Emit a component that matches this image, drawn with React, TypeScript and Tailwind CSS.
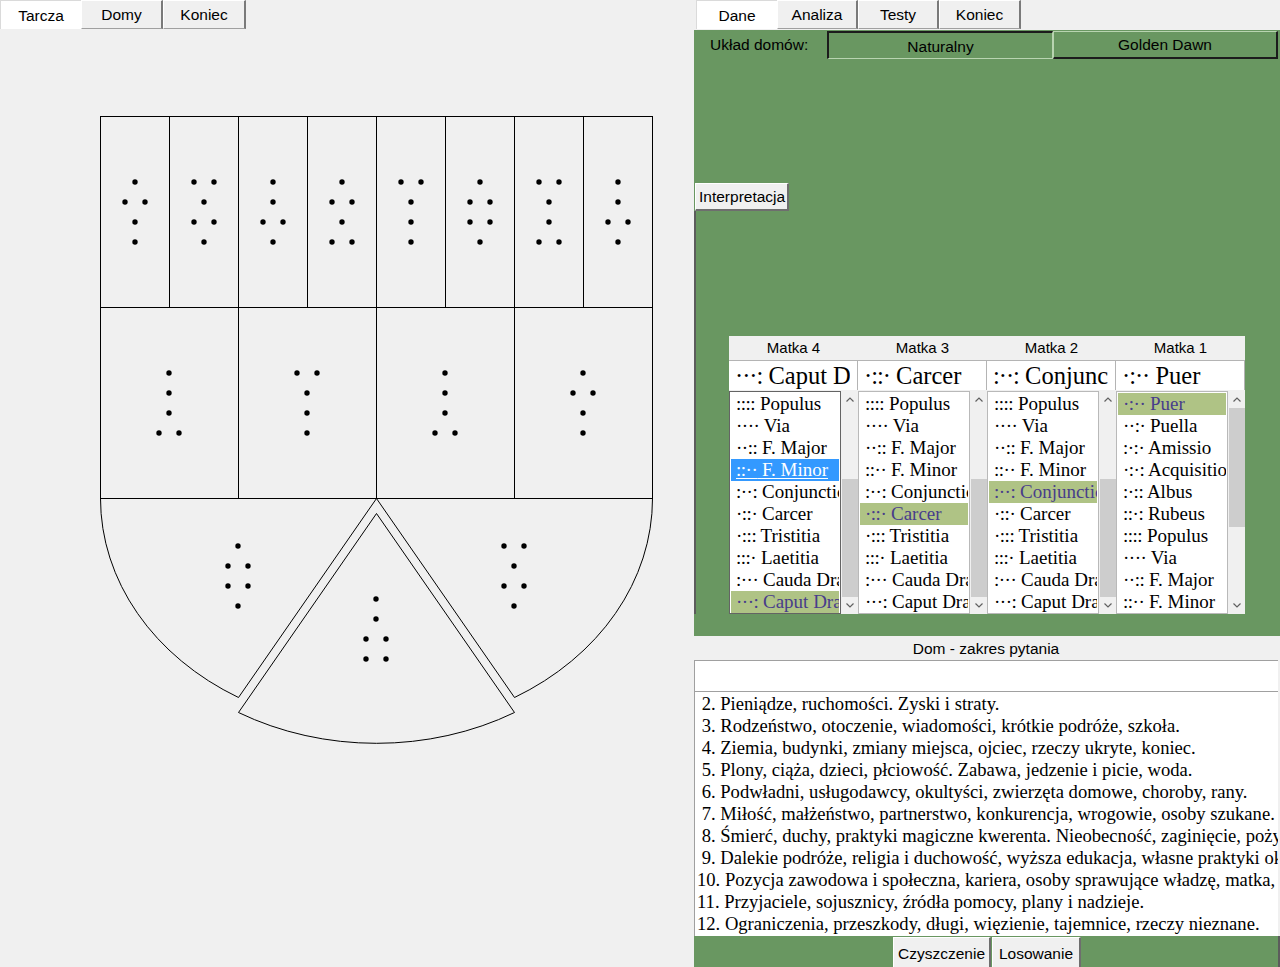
import React from "react";

const SANS = "font-['Liberation_Sans',Arial,sans-serif]";
const SERIF = "font-['Liberation_Serif','Times_New_Roman',serif]";

type Fig = number[];

// shield figures, rows top to bottom (1 = single dot, 2 = pair)
const topRow: Fig[] = [
  [1, 2, 1, 1],
  [2, 1, 2, 1],
  [1, 1, 2, 1],
  [1, 2, 1, 2],
  [2, 1, 1, 1],
  [1, 2, 2, 1],
  [2, 1, 1, 2],
  [1, 1, 2, 1],
];
const midRow: Fig[] = [
  [1, 1, 1, 2],
  [2, 1, 1, 1],
  [1, 1, 1, 2],
  [1, 2, 1, 1],
];

function Dots({ cx, cy, rows }: { cx: number; cy: number; rows: Fig }) {
  return (
    <g fill="#000">
      {rows.map((n, i) => {
        const y = cy - 30 + i * 20;
        return n === 1 ? (
          <circle key={i} cx={cx} cy={y} r={2.7} />
        ) : (
          <g key={i}>
            <circle cx={cx - 10} cy={y} r={2.7} />
            <circle cx={cx + 10} cy={y} r={2.7} />
          </g>
        );
      })}
    </g>
  );
}

function Shield() {
  return (
    <svg width={694} height={937} viewBox="0 30 694 937" className="block">
      <g stroke="#000" strokeWidth={1} fill="none" shapeRendering="crispEdges">
        <path d="M100.5 116.5 H652.5 V498.5 H100.5 Z" />
        <path d="M100.5 307.5 H652.5" />
        {[169, 238, 307, 376, 445, 514, 583].map((x) => (
          <path key={x} d={`M${x + 0.5} 116.5 V307.5`} />
        ))}
        {[238, 376, 514].map((x) => (
          <path key={x} d={`M${x + 0.5} 307.5 V498.5`} />
        ))}
      </g>
      <g stroke="#000" strokeWidth={1} fill="none">
        <path d="M100.5 498.5 A276 230 0 0 0 238.5 697.5 L376.5 498.5" />
        <path d="M652.5 498.5 A276 230 0 0 1 514.5 697.5 L376.5 498.5" />
        <path d="M376.5 513.5 L238.5 712.5 A276 230 0 0 0 514.5 712.5 Z" />
      </g>
      {topRow.map((f, i) => (
        <Dots key={i} cx={135 + i * 69} cy={212} rows={f} />
      ))}
      {midRow.map((f, i) => (
        <Dots key={i} cx={169 + i * 138} cy={403} rows={f} />
      ))}
      <Dots cx={238} cy={576} rows={[1, 2, 2, 1]} />
      <Dots cx={514} cy={576} rows={[2, 1, 2, 1]} />
      <Dots cx={376} cy={629} rows={[1, 1, 2, 2]} />
    </svg>
  );
}

function Tab({ label, active, w }: { label: string; active?: boolean; w: string }) {
  return (
    <div
      className={
        active
          ? `${w} h-[29px] flex items-center justify-center pt-[2px] bg-white border-l border-t border-[#dadada] text-[15.5px] text-black`
          : `${w} h-[29px] flex items-center justify-center bg-[#f0f0f0] border-l border-t border-white border-r-2 border-r-[#7a7a7a] border-b border-b-[#a0a0a0] text-[15.5px] text-black`
      }
    >
      {label}
    </div>
  );
}

const sym: Record<string, string> = {
  Populus: "::::",
  Via: "····",
  "F. Major": "··::",
  "F. Minor": "::··",
  Conjunctio: ":··:",
  Carcer: "·::·",
  Tristitia: "·:::",
  Laetitia: ":::·",
  "Cauda Draconis": ":···",
  "Caput Draconis": "···:",
  Puer: "·:··",
  Puella: "··:·",
  Amissio: ":·:·",
  Acquisitio: "·:·:",
  Albus: ":·::",
  Rubeus: "::·:",
};

const mainList = [
  "Populus",
  "Via",
  "F. Major",
  "F. Minor",
  "Conjunctio",
  "Carcer",
  "Tristitia",
  "Laetitia",
  "Cauda Draconis",
  "Caput Draconis",
];
const puerList = [
  "Puer",
  "Puella",
  "Amissio",
  "Acquisitio",
  "Albus",
  "Rubeus",
  "Populus",
  "Via",
  "F. Major",
  "F. Minor",
];

type Col = {
  title: string;
  current: string;
  items: string[];
  hit: string;
  sel?: string;
  thumbTop: number;
  focused?: boolean;
};

const cols: Col[] = [
  { title: "Matka 4", current: "Caput Draconis", items: mainList, hit: "Caput Draconis", sel: "F. Minor", thumbTop: 71, focused: true },
  { title: "Matka 3", current: "Carcer", items: mainList, hit: "Carcer", thumbTop: 71 },
  { title: "Matka 2", current: "Conjunctio", items: mainList, hit: "Conjunctio", thumbTop: 71 },
  { title: "Matka 1", current: "Puer", items: puerList, hit: "Puer", thumbTop: 0 },
];

function ScrollBar({ thumbTop }: { thumbTop: number }) {
  return (
    <div className="w-[16px] ml-[1px] flex flex-col bg-[#f0f0f0]">
      <div className="h-[17px] flex items-center justify-center">
        <svg width="8" height="5" viewBox="0 0 8 5">
          <path d="M0.5 4.5 L4 1 L7.5 4.5" stroke="#606060" strokeWidth="1.2" fill="none" />
        </svg>
      </div>
      <div style={{ height: thumbTop }} />
      <div className="h-[119px] bg-[#cdcdcd]" />
      <div className="flex-1" />
      <div className="h-[17px] flex items-center justify-center">
        <svg width="8" height="5" viewBox="0 0 8 5">
          <path d="M0.5 0.5 L4 4 L7.5 0.5" stroke="#606060" strokeWidth="1.2" fill="none" />
        </svg>
      </div>
    </div>
  );
}

function MatkaTable() {
  return (
    <div className="w-[516px] bg-[#f0f0f0]">
      <div className="flex h-[24px]">
        {cols.map((c) => (
          <div key={c.title} className="w-[129px] flex items-center justify-center text-[15px] text-black">
            {c.title}
          </div>
        ))}
      </div>
      <div className="flex h-[30px]">
        {cols.map((c) => (
          <div
            key={c.title}
            className={`w-[129px] bg-white border-t border-r border-[#b4b4b4] pl-[6px] pr-[7px] text-[24.5px] leading-[29px] text-black ${SERIF}`}
          >
            <div className="overflow-hidden whitespace-nowrap">
              <span className="tracking-[-1px]">{sym[c.current]}</span> {c.current}
            </div>
          </div>
        ))}
      </div>
      <div className="flex h-[224px] pt-[1px]">
        {cols.map((c) => (
          <div key={c.title} className="w-[129px] flex">
            <div
              className={
                c.focused
                  ? "w-[112px] border border-[#646464] bg-white p-[1px] overflow-hidden"
                  : "w-[112px] border border-[#b9b9b9] bg-white p-[1px] overflow-hidden"
              }
            >
              {c.items.map((it) => {
                const cls =
                  it === c.sel
                    ? "bg-[#3399ff] text-white underline underline-offset-2"
                    : it === c.hit
                    ? "bg-[#afc385] text-[#483d8b]"
                    : "text-black";
                return (
                  <div
                    key={it}
                    className={`h-[22px] leading-[22px] pl-[5px] whitespace-nowrap overflow-hidden text-[19px] ${SERIF} ${cls}`}
                  >
                    <span className="tracking-[-0.5px]">{sym[it]}</span> {it}
                  </div>
                );
              })}
            </div>
            <ScrollBar thumbTop={c.thumbTop} />
          </div>
        ))}
      </div>
    </div>
  );
}

const houses = [
  " 2. Pieniądze, ruchomości. Zyski i straty.",
  " 3. Rodzeństwo, otoczenie, wiadomości, krótkie podróże, szkoła.",
  " 4. Ziemia, budynki, zmiany miejsca, ojciec, rzeczy ukryte, koniec.",
  " 5. Plony, ciąża, dzieci, płciowość. Zabawa, jedzenie i picie, woda.",
  " 6. Podwładni, usługodawcy, okultyści, zwierzęta domowe, choroby, rany.",
  " 7. Miłość, małżeństwo, partnerstwo, konkurencja, wrogowie, osoby szukane.",
  " 8. Śmierć, duchy, praktyki magiczne kwerenta. Nieobecność, zaginięcie, pożyczki, spadki.",
  " 9. Dalekie podróże, religia i duchowość, wyższa edukacja, własne praktyki okultystyczne.",
  "10. Pozycja zawodowa i społeczna, kariera, osoby sprawujące władzę, matka, sława.",
  "11. Przyjaciele, sojusznicy, źródła pomocy, plany i nadzieje.",
  "12. Ograniczenia, przeszkody, długi, więzienie, tajemnice, rzeczy nieznane.",
];

const raised =
  "bg-[#f0f0f0] border-t border-l border-white border-r-2 border-b-2 border-r-[#6e6e6e] border-b-[#6e6e6e] text-[15.5px] text-black";

export default function App() {
  return (
    <div className={`w-[1280px] h-[967px] flex bg-[#f0f0f0] overflow-hidden ${SANS}`}>
      {/* left: shield */}
      <div className="w-[694px] flex flex-col">
        <div className="h-[30px] flex items-start">
          <Tab label="Tarcza" active w="w-[81px]" />
          <Tab label="Domy" w="w-[82px]" />
          <Tab label="Koniec" w="w-[83px]" />
        </div>
        <Shield />
      </div>

      {/* right: data */}
      <div className="w-[586px] flex flex-col">
        <div className="h-[30px] flex items-start pl-[2px]">
          <Tab label="Dane" active w="w-[81px]" />
          <Tab label="Analiza" w="w-[81px]" />
          <Tab label="Testy" w="w-[81px]" />
          <Tab label="Koniec" w="w-[82px]" />
        </div>

        <div className="h-[606px] bg-[#699761] flex flex-col">
          <div className="h-[28px] mt-[1px] flex">
            <div className="w-[133px] pl-[16px] flex items-center text-[15.5px] text-black">Układ domów:</div>
            <div className="w-[226px] flex items-center justify-center pt-[2px] border-t-2 border-l-2 border-[#1c1c1c] border-b border-r border-b-[#b8d4b0] border-r-[#b8d4b0] text-[15.5px] text-black">
              Naturalny
            </div>
            <div className="w-[225px] flex items-center justify-center border-t border-l border-[#b8d4b0] border-b-2 border-r-2 border-b-[#1c1c1c] border-r-[#1c1c1c] text-[15.5px] text-black">
              Golden Dawn
            </div>
          </div>
          <div className="h-[124px]" />
          <div className="h-[28px] flex">
            <div className={`w-[94px] ml-[1px] flex items-center pl-[3px] pt-[1px] ${raised}`}>Interpretacja</div>
          </div>
          <div className="flex-1 border-l-2 border-[#5c5c5c] pl-[33px] pt-[125px]">
            <MatkaTable />
          </div>
          <div className="h-[22px]" />
        </div>

        <div className="h-[24px] flex items-center justify-center pt-[1px] pr-[2px] text-[15.5px] text-black">
          Dom - zakres pytania
        </div>
        <div className="h-[31px] mr-[2px] bg-white border-t border-l border-[#a0a0a0]" />
        <div className={`h-[245px] mr-[2px] bg-white border-t border-l border-[#a0a0a0] overflow-hidden ${SERIF}`}>
          {houses.map((h) => (
            <div key={h} className="h-[22px] leading-[23px] pl-[2px] whitespace-pre text-[18.6px] text-black">
              {h}
            </div>
          ))}
        </div>
        <div className="flex-1 bg-[#699761] border-r-2 border-[#5c5c5c] flex pl-[199px] pt-[1px] overflow-hidden">
          <div className={`w-[98px] h-[33px] shrink-0 flex items-center justify-center pt-[2px] ${raised}`}>Czyszczenie</div>
          <div className={`w-[89px] h-[33px] shrink-0 ml-[1px] flex items-center justify-center pt-[2px] ${raised}`}>Losowanie</div>
        </div>
      </div>
    </div>
  );
}
